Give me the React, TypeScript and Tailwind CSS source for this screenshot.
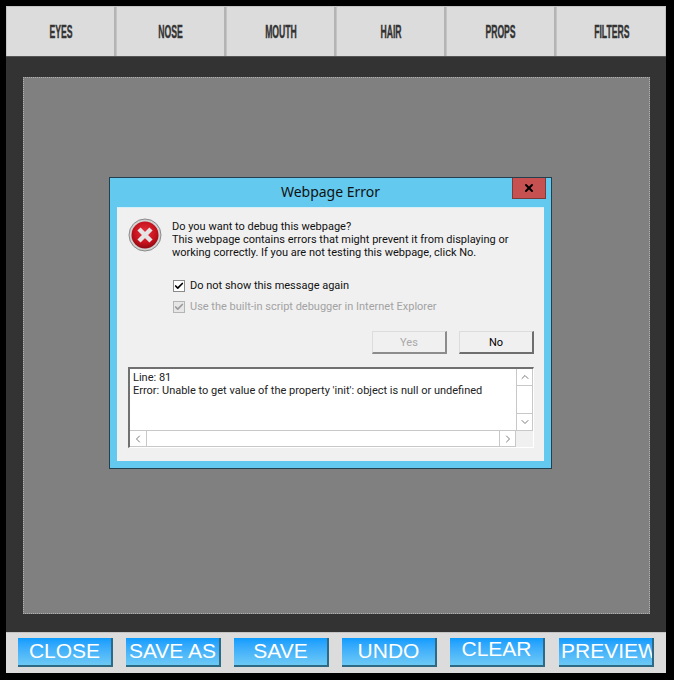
import { Check, ChevronDown, ChevronLeft, ChevronRight, ChevronUp, X } from "lucide-react"

const tabs = ["EYES", "NOSE", "MOUTH", "HAIR", "PROPS", "FILTERS"]

function ErrorIcon() {
  return (
    <svg width="34" height="34" viewBox="0 0 34 34" className="shrink-0">
      <defs>
        <radialGradient id="red" cx="50%" cy="40%" r="60%">
          <stop offset="0%" stopColor="#e8313a" />
          <stop offset="70%" stopColor="#c3111c" />
          <stop offset="100%" stopColor="#8e0b12" />
        </radialGradient>
      </defs>
      <circle cx="17" cy="17" r="16" fill="#d2d2d2" stroke="#8a8a8a" strokeWidth="1" />
      <circle cx="17" cy="17" r="13.5" fill="url(#red)" />
      <path d="M11 11 L23 23 M23 11 L11 23" stroke="#e4e4e4" strokeWidth="4.5" strokeLinecap="butt" />
    </svg>
  )
}

function CheckRow({ label, disabled }: { label: string; disabled?: boolean }) {
  return (
    <div className={disabled ? "flex items-center h-[13px] text-[#a3a3a3]" : "flex items-center h-[13px] text-[#111]"}>
      <div className={disabled ? "w-[12px] h-[12px] border border-[#b5b5b5] bg-[#e6e6e6] flex items-center justify-center" : "w-[12px] h-[12px] border border-[#8a8a8a] bg-white flex items-center justify-center"}>
        <Check size={10} strokeWidth={4} className={disabled ? "text-[#9a9a9a]" : "text-black"} />
      </div>
      <span className="ml-[5px]">{label}</span>
    </div>
  )
}

function ScrollBtn({ children, className }: { children: React.ReactNode; className: string }) {
  return (
    <div className={"flex items-center justify-center bg-white text-[#7a7a7a] " + className}>
      {children}
    </div>
  )
}

function ErrorDialog() {
  return (
    <div className="w-[443px] h-[292px] border border-[#24404f] bg-[#63c9ee] flex flex-col">
      <div className="h-[29px] flex shrink-0 relative">
        <div className="flex-1 text-center text-[14px] leading-[28px] text-[#111] font-['Noto_Sans',sans-serif]">Webpage Error</div>
        <div className="absolute right-[5px] top-0 w-[34px] h-[21px] bg-[#c75050] border border-[#7d3a3a] border-t-0 flex items-center justify-center">
          <X size={12} strokeWidth={4} className="text-black" />
        </div>
      </div>
      <div className="mx-[7px] h-[254px] bg-[#f0f0f0] border-t border-[#d5eef8] px-[11px] pt-[10px] flex flex-col text-[11px] leading-[13px] font-['Roboto',sans-serif]">
        <div className="flex">
          <ErrorIcon />
          <div className="ml-[10px] pt-[2px] text-[#111] whitespace-nowrap">
            <div>Do you want to debug this webpage?</div>
            <div>This webpage contains errors that might prevent it from displaying or</div>
            <div>working correctly. If you are not testing this webpage, click No.</div>
          </div>
        </div>
        <div className="ml-[45px] mt-[20px] flex flex-col gap-[8px]">
          <CheckRow label="Do not show this message again" />
          <CheckRow label="Use the built-in script debugger in Internet Explorer" disabled />
        </div>
        <div className="flex justify-end gap-[12px] mt-[18px] mr-[-1px]">
          <div className="w-[75px] h-[23px] bg-[#f0f0f0] border border-[#dcdcdc] border-r-2 border-b-2 border-r-[#8c8c8c] border-b-[#8c8c8c] flex items-center justify-center text-[#a8a8a8]">Yes</div>
          <div className="w-[75px] h-[23px] bg-[#f0f0f0] border border-[#dcdcdc] border-r-2 border-b-2 border-r-[#6e6e6e] border-b-[#6e6e6e] flex items-center justify-center text-black">No</div>
        </div>
        <div className="mt-[13px] h-[81px] border-t-2 border-l-2 border-[#707070] border-r border-b border-r-white border-b-white mr-[-1px] flex flex-col">
          <div className="flex-1 flex min-h-0">
            <div className="flex-1 bg-white px-[3px] pt-[2px] text-[#222]">
              <div>Line: 81</div>
              <div>Error: Unable to get value of the property 'init': object is null or undefined</div>
            </div>
            <div className="w-[17px] bg-[#f0f0f0] flex flex-col border-l border-[#c8c8c8] border-r border-r-[#c8c8c8]">
              <ScrollBtn className="h-[17px] border-b border-[#c8c8c8]"><ChevronUp size={12} /></ScrollBtn>
              <div className="flex-1 bg-white" />
              <ScrollBtn className="h-[17px] border-t border-[#c8c8c8]"><ChevronDown size={12} /></ScrollBtn>
            </div>
          </div>
          <div className="h-[17px] flex border-t border-[#c8c8c8]">
            <div className="flex-1 flex bg-white border-b border-[#c8c8c8]">
              <ScrollBtn className="w-[17px] border-r border-[#c8c8c8]"><ChevronLeft size={12} /></ScrollBtn>
              <div className="flex-1" />
              <ScrollBtn className="w-[17px] border-l border-r border-[#c8c8c8]"><ChevronRight size={12} /></ScrollBtn>
            </div>
            <div className="w-[17px] bg-[#f0f0f0]" />
          </div>
        </div>
      </div>
    </div>
  )
}

function App() {
  return (
    <div className="w-[674px] h-[680px] bg-black pt-[6px] pl-[6px] overflow-hidden">
      <div className="w-[660px]">
        {/* Tabs */}
        <div className="flex h-[51px] border-t border-[#c4c4c4] border-b border-b-[#555]">
          {tabs.map((t) => (
            <div key={t} className="w-[110px] bg-[#dcdcdc] border-l border-[#c4c4c4] border-r-2 border-r-[#b4b4b4] last:border-r last:border-r-[#c4c4c4] flex items-center justify-center pt-[1px] pl-[1px]">
              <span className="inline-block text-[18px] font-bold text-[#333] scale-x-[0.48] [-webkit-text-stroke:0.4px_#333] font-['Liberation_Sans',sans-serif]">{t}</span>
            </div>
          ))}
        </div>

        {/* Canvas */}
        <div className="h-[575px] bg-[#333333] pt-[20px] pb-[18px] pl-[17px] pr-[16px]">
          <div className="h-full border border-dotted border-[#b0b0b0] bg-[#808080] pl-[85px] pt-[99px]">
            <ErrorDialog />
          </div>
        </div>

        {/* Bottom buttons */}
        <div className="h-[41px] bg-[#dcdcdc] border-t border-[#c4c4c4] pl-[12px] pt-[5px] flex gap-[13px]">
          {["CLOSE", "SAVE AS", "SAVE", "UNDO", "CLEAR"].map((b) => (
            <div key={b} className="w-[95px] h-[29px] shrink-0 overflow-hidden bg-gradient-to-b from-[#0a9cff] to-[#6cc9f4] border-r-2 border-b-2 border-[#2f6a85] flex justify-center whitespace-nowrap text-white text-[21px] leading-[26px] font-['Liberation_Sans',sans-serif]">
              <span className={b === "CLEAR" ? "-mt-[2px]" : ""}>{b}</span>
            </div>
          ))}
          <div className="w-[95px] h-[29px] ml-px shrink-0 overflow-hidden bg-gradient-to-b from-[#0a9cff] to-[#6cc9f4] border-r-2 border-b-2 border-[#2f6a85] pl-[2px] whitespace-nowrap text-white text-[21px] leading-[26px] font-['Liberation_Sans',sans-serif]">
            PREVIEW
          </div>
        </div>
      </div>
    </div>
  )
}

export default App
